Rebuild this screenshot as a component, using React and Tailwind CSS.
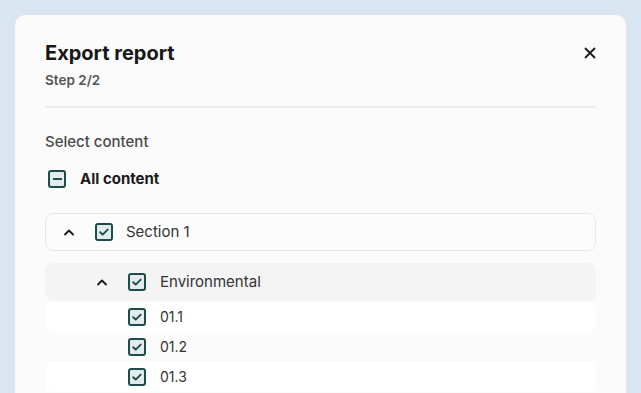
import React from 'react';

const font = { fontFamily: 'Inter, "Noto Sans", sans-serif' };

const CheckBox = ({ state = 'checked' }) => (
  <span className="flex h-[18px] w-[18px] shrink-0 items-center justify-center rounded-[3px] border-2 border-[#1e4b4b] bg-[#e3ecec]">
    {state === 'checked' ? (
      <svg width="12" height="12" viewBox="0 0 12 12" fill="none">
        <path d="M2.2 6.2l2.5 2.4 5-5" stroke="#1e4b4b" strokeWidth="1.9" strokeLinecap="round" strokeLinejoin="round" />
      </svg>
    ) : (
      <span className="block h-[2px] w-[9px] bg-[#1e4b4b]" />
    )}
  </span>
);

const Chevron = () => (
  <svg width="12" height="8" viewBox="0 0 12 8" fill="none" className="shrink-0">
    <path d="M2 6.5l4-4 4 4" stroke="#1a1a1a" strokeWidth="1.8" strokeLinecap="round" strokeLinejoin="round" />
  </svg>
);

const items = [
  { label: '01.1', bg: 'bg-white' },
  { label: '01.2', bg: 'bg-transparent' },
  { label: '01.3', bg: 'bg-white' },
];

export default function App() {
  return (
    <div className="h-[393px] overflow-hidden bg-[#d9e5f0] px-[15px] pt-[15px]" style={font}>
      <div className="h-[420px] rounded-[10px] bg-[#fbfbfb] px-[30px] pt-[24px]">
        <div className="flex items-start justify-between">
          <div>
            <h2 className="text-[20px] font-bold leading-[28px] text-[#171717]">Export report</h2>
            <p className="mt-[4px] text-[13.5px] font-semibold leading-[18px] text-[#555]">Step 2/2</p>
          </div>
          <button className="mr-[-2px] mt-[6px] p-[2px]">
            <svg width="12" height="12" viewBox="0 0 12 12" fill="none">
              <path d="M1 1l10 10M11 1L1 11" stroke="#1a1a1a" strokeWidth="1.8" />
            </svg>
          </button>
        </div>

        <div className="mt-[17px] h-[2px] bg-[#ececec]" />

        <p className="mt-[23px] text-[15px] font-medium leading-[22px] text-[#4a4a4a]">Select content</p>

        <div className="mt-[15px] flex items-center gap-[14px] pl-[3px]">
          <CheckBox state="indeterminate" />
          <span className="text-[15px] font-bold leading-[22px] text-[#1a1a1a]">All content</span>
        </div>

        <div className="mt-[23px] flex h-[38px] items-center rounded-[8px] border border-[#e6e6e6] bg-[#fcfcfc] pl-[17px]">
          <Chevron />
          <span className="ml-[20px]"><CheckBox /></span>
          <span className="ml-[13px] text-[15px] leading-[22px] text-[#333]">Section 1</span>
        </div>

        <div className="mt-[12px] flex h-[38px] items-center rounded-[8px] bg-[#f4f4f4] pl-[51px]">
          <Chevron />
          <span className="ml-[20px]"><CheckBox /></span>
          <span className="ml-[14px] text-[15px] leading-[22px] text-[#333]">Environmental</span>
        </div>

        <div className="mt-[1px] flex flex-col">
          {items.map((it) => (
            <div key={it.label} className={`flex h-[30px] items-center rounded-[8px] ${it.bg} pl-[83px]`}>
              <CheckBox />
              <span className="ml-[14px] text-[14px] leading-[20px] text-[#333]">{it.label}</span>
            </div>
          ))}
        </div>
      </div>
    </div>
  );
}
